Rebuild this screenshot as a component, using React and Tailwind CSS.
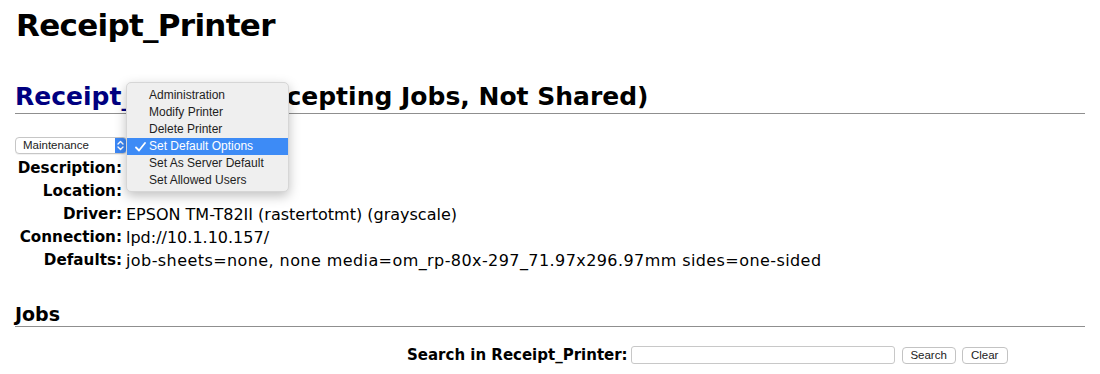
import React from "react";

const rows = [
  ["Description:", ""],
  ["Location:", ""],
  ["Driver:", "EPSON TM-T82II (rastertotmt) (grayscale)"],
  ["Connection:", "lpd://10.1.10.157/"],
  ["Defaults:", "job-sheets=none, none media=om_rp-80x-297_71.97x296.97mm sides=one-sided"],
];

const menu = [
  "Administration",
  "Modify Printer",
  "Delete Printer",
  "Set Default Options",
  "Set As Server Default",
  "Set Allowed Users",
];

export default function App() {
  return (
    <div className="w-[1100px] h-[374px] overflow-hidden bg-white text-black font-['DejaVu_Sans',sans-serif] px-[15px]">
      <h1 className="text-[31px] font-bold leading-[37px] pt-[7px] pl-[1px] tracking-[-0.7px]">Receipt_Printer</h1>

      <h2 className="mt-[38px] text-[25px] font-bold leading-[30px] border-b border-[#8f8f8f] pb-[1px]">
        <span className="text-[#000080]">Receipt_Printer</span> (Accepting Jobs, Not Shared)
      </h2>

      <div className="relative mt-[23px] h-[17px] w-[112px]">
        <div className="h-[17px] w-[112px] flex items-stretch rounded-[4px] border border-[#c6c6c6] bg-white shadow-[0_1px_0_rgba(0,0,0,0.05)] overflow-hidden">
          <div className="flex-1 pl-[7px] text-[11.5px] leading-[15px] font-['Liberation_Sans',sans-serif] text-[#222]">Maintenance</div>
          <div className="w-[11px] bg-[#3b87f5] flex items-center justify-center">
            <svg width="7" height="11" viewBox="0 0 7 11" fill="none" stroke="white" strokeWidth="1.4" strokeLinecap="round" strokeLinejoin="round">
              <path d="M1 4 L3.5 1.5 L6 4" />
              <path d="M1 7 L3.5 9.5 L6 7" />
            </svg>
          </div>
        </div>

        <div className="absolute left-[111px] top-[-55px] w-[163px] h-[110px] rounded-[5px] bg-[#efefef] border border-[#d6d6d6] shadow-[0_4px_12px_rgba(0,0,0,0.25)] py-[4px] font-['Liberation_Sans',sans-serif] text-[12px] text-[#1e1e1e] z-10">
          {menu.map((m) => {
            const sel = m === "Set Default Options";
            return (
              <div
                key={m}
                className={
                  "h-[17px] flex items-center pl-[22px] relative leading-[17px] " +
                  (sel ? "bg-[#3d8bf6] text-white" : "")
                }
              >
                {sel && (
                  <svg className="absolute left-[8px] top-[4px]" width="11" height="10" viewBox="0 0 11 10" fill="none" stroke="white" strokeWidth="1.8" strokeLinecap="round" strokeLinejoin="round">
                    <path d="M1 5.5 L4 8.5 L10 1" />
                  </svg>
                )}
                {m}
              </div>
            );
          })}
        </div>
      </div>

      <table className="mt-[3px] border-collapse text-[16px] leading-[23px]">
        <tbody>
          {rows.map(([l, v]) => (
            <tr key={l}>
              <th className="text-right font-bold text-[15.2px] w-[111px] pr-[4px] align-top">{l}</th>
              <td className={"align-top " + (l === "Defaults:" ? "tracking-[0.42px]" : "")}>{v}</td>
            </tr>
          ))}
        </tbody>
      </table>

      <h3 className="mt-[30px] text-[19px] font-bold leading-[24px] border-b border-[#8f8f8f] pb-[0px]">Jobs</h3>

      <div className="mt-[17px] flex items-center pl-[392px] gap-[3px]">
        <span className="text-[15px] font-bold">Search in Receipt_Printer:</span>
        <input className="w-[264px] h-[18px] border border-[#c8c8c8] rounded-[3px] bg-white" />
        <button className="ml-[4px] h-[17px] w-[54px] border border-[#c3c3c3] rounded-[4px] bg-white text-[11.5px] font-['Liberation_Sans',sans-serif] leading-[15px] text-[#222]">Search</button>
        <button className="ml-[3px] h-[17px] w-[46px] border border-[#c3c3c3] rounded-[4px] bg-white text-[11.5px] font-['Liberation_Sans',sans-serif] leading-[15px] text-[#222]">Clear</button>
      </div>
    </div>
  );
}
